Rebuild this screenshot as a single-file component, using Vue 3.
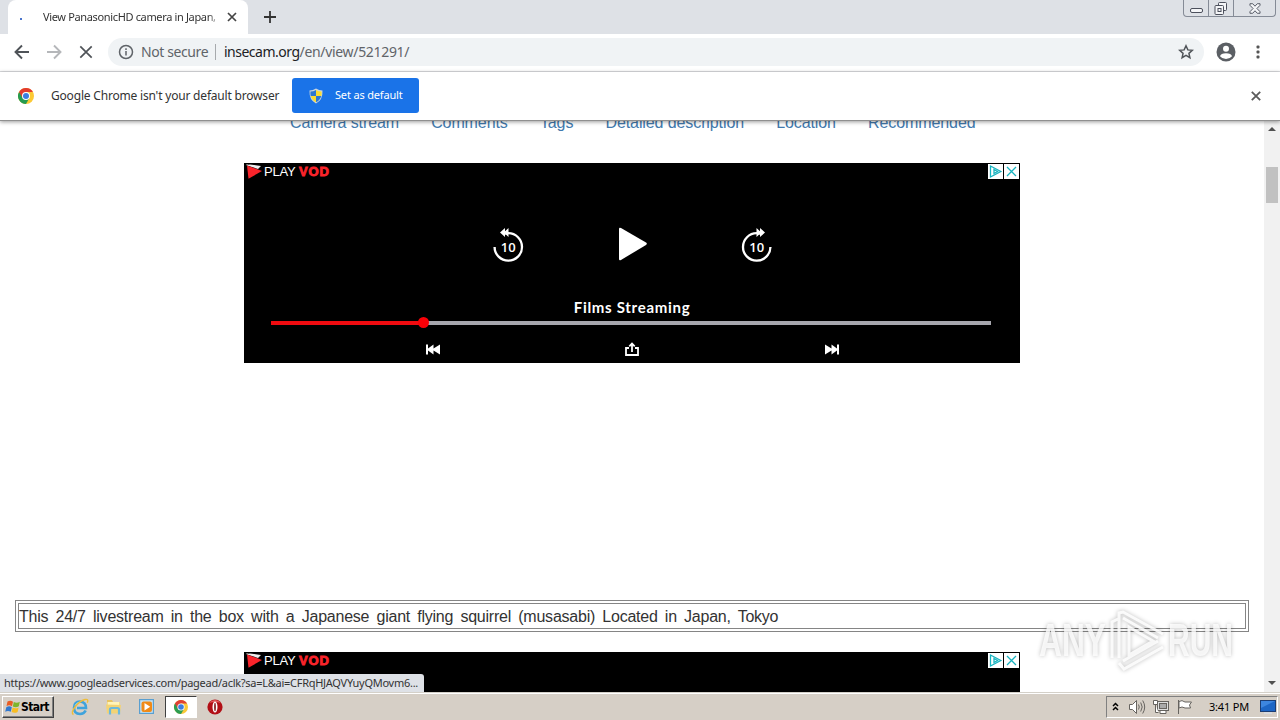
<template>
  <div class="screen">
    <header class="tabstrip">
      <div class="tab">
        <span class="spinner"></span>
        <span class="tab-title">View PanasonicHD camera in Japan,</span>
        <svg class="tab-close" viewBox="0 0 10 10"><path d="M1 1l8 8M9 1l-8 8" /></svg>
      </div>
      <svg class="new-tab" viewBox="0 0 12 12"><path d="M6 0v12M0 6h12" /></svg>
      <div class="window-controls">
        <span class="control minimize">
          <svg viewBox="0 0 13 6"><rect x=".5" y=".5" width="12" height="4" rx="1.5" /></svg>
        </span>
        <span class="control restore">
          <svg viewBox="0 0 14 14">
            <path d="M4.500 3.500v-2q0-1 1-1h6q1 0 1 1v6q0 1-1 1h-2" />
            <rect x="1" y="3.500" width="8.500" height="9" rx="1" />
            <rect x="4" y="6.500" width="3" height="3" />
          </svg>
        </span>
        <span class="control close">
          <svg viewBox="0 0 13 12"><path d="M1 .8h3l2.500 2.700L9 .8h3v1.700L8.600 6l3.400 3.500v1.700H9L6.500 8.500 4 11.200H1V9.500L4.400 6 1 2.500z" /></svg>
        </span>
      </div>
    </header>

    <div class="toolbar">
      <svg class="nav-icon" viewBox="0 0 16 16"><path d="M15 8H2M8 1.500L1.500 8 8 14.500" /></svg>
      <svg class="nav-icon muted" viewBox="0 0 16 16"><path d="M1 8h13M8 1.500L14.500 8 8 14.500" /></svg>
      <svg class="nav-icon stop" viewBox="0 0 16 16"><path d="M2.300 2.300l11.400 11.400M13.700 2.300L2.300 13.700" /></svg>
      <div class="omnibox">
        <svg class="info-icon" viewBox="0 0 16 16">
          <circle cx="8" cy="8" r="6.500" />
          <path d="M8 7v4.500M8 4.300v1.600" />
        </svg>
        <span class="not-secure">Not secure</span>
        <span class="divider"></span>
        <span class="url"><b>insecam.org</b><i>/en/view/521291/</i></span>
        <svg class="star" viewBox="0 0 16 16"><path d="M8 1.800l1.850 4.100 4.450.45-3.350 3 .95 4.400L8 11.450 4.100 13.750l.95-4.400-3.350-3 4.450-.45z" /></svg>
      </div>
      <svg class="profile" viewBox="0 0 20 20">
        <circle cx="10" cy="10" r="9.500" fill="#5b5f64" />
        <circle cx="10" cy="6.700" r="3" fill="#fff" />
        <path d="M4 14.200q.7-3 6-3t6 3Q13.700 17 10 17t-6-2.800z" fill="#fff" />
      </svg>
      <svg class="menu-dots" viewBox="0 0 4 14">
        <rect x=".5" y=".5" width="3" height="3" rx="1" />
        <rect x=".5" y="5.500" width="3" height="3" rx="1" />
        <rect x=".5" y="10.500" width="3" height="3" rx="1" />
      </svg>
    </div>

    <div class="infobar">
      <svg class="chrome-icon" viewBox="0 0 16 16">
        <circle cx="8" cy="8" r="8" fill="#fcc934" />
        <path d="M8 8L1.070 4A8 8 0 0 0 8 16l3.400-6z" fill="#259b50" />
        <path d="M8 4h6.930A8 8 0 0 0 1.070 4l3.500 6z" fill="#e33b2e" />
        <circle cx="8" cy="8" r="4" fill="#fff" />
        <circle cx="8" cy="8" r="3" fill="#3b7de0" />
      </svg>
      <span class="infobar-text">Google Chrome isn't your default browser</span>
      <button class="default-button">
        <svg viewBox="0 0 14 16">
          <path d="M7 .5Q10 2.500 13.500 2.500 14 12 7 15.500 0 12 .5 2.500 4 2.500 7 .5z" fill="#c9d6df" />
          <path d="M7 2v6H1.700Q1.200 6 1.500 3.500 4.500 3.500 7 2z" fill="#2c77d2" />
          <path d="M7 2v6h5.300q.5-2 .2-4.500Q9.500 3.500 7 2z" fill="#f9dc33" />
          <path d="M7 14.300V8H1.700Q3 12.300 7 14.300z" fill="#f9dc33" />
          <path d="M7 14.300V8h5.300Q11 12.300 7 14.300z" fill="#2c77d2" />
        </svg>
        <span>Set as default</span>
      </button>
      <svg class="infobar-close" viewBox="0 0 10 10"><path d="M.8.8l8.400 8.400M9.200.8L.8 9.200" /></svg>
    </div>

    <div class="viewport">
      <main class="page">
        <nav class="links">
          <a v-for="link in links" :key="link">{{ link }}</a>
        </nav>

        <section v-for="slot in ['top', 'bottom']" :key="slot" class="ad" :class="slot">
          <div class="ad-head">
            <svg class="brand-mark" viewBox="0 0 16 15">
              <path d="M0 0l5 2 10 3.500L11 4 1 1z" fill="#fff" />
              <path d="M0 1l4-.5 11 1.500-3 3z" fill="#eee" />
              <path d="M1 1.500L16 7 2.500 14.800z" fill="#f9242b" />
            </svg>
            <span class="brand-play">PLAY</span><span class="brand-vod">VOD</span>
            <span class="choices">
              <svg viewBox="0 0 15 15"><path d="M2.500 2v11L12.800 7.500zM6 5.500v4L9.500 7.500z" /></svg>
              <svg viewBox="0 0 15 15"><path d="M3 3l9 9M12 3l-9 9" /></svg>
            </span>
          </div>
          <template v-if="slot === 'top'">
            <div class="controls">
              <svg class="skip" viewBox="0 0 32 36">
                <path class="ring" d="M11.500 7.300Q13.500 6.200 16.300 6.200A13.700 13.700 0 1 1 2.600 19.900v1" />
                <path d="M8 5.500L13 1v3.200L16.500 1v9L13 6.800V10z" />
                <text x="16.300" y="24.500">10</text>
              </svg>
              <svg class="play" viewBox="0 0 30 34"><path d="M1 2Q1 0 3 1l25 14.500q1.700 1.200 0 2.400L3 33Q1 34 1 32z" /></svg>
              <svg class="skip" viewBox="0 0 32 36">
                <path class="ring" d="M20.500 7.300Q18.500 6.200 15.700 6.200A13.700 13.700 0 1 0 29.400 19.900v1" />
                <path d="M24 5.500L19 1v3.200L15.500 1v9L19 6.800V10z" />
                <text x="15.700" y="24.500">10</text>
              </svg>
            </div>
            <div class="ad-title">Films Streaming</div>
            <div class="track">
              <span class="played"></span>
              <span class="knob"></span>
            </div>
            <div class="actions">
              <svg viewBox="0 0 14 11"><path d="M0 .5h2v4L7.500.5v4L14 .5v10l-6.500-4v4L2 6.500v4H0z" /></svg>
              <svg class="share" viewBox="0 0 14 14"><path d="M4 6H1v7h12V6h-3M7 10V2M4.300 4.300L7 1.500l2.700 2.800" /></svg>
              <svg viewBox="0 0 14 11"><path d="M14 .5h-2v4L6.500.5v4L0 .5v10l6.500-4v4l5.500-4v4h2z" /></svg>
            </div>
          </template>
        </section>

        <p class="description">This 24/7 livestream in the box with a Japanese giant flying squirrel (musasabi) Located in Japan, Tokyo</p>
      </main>
      <aside class="scrollbar">
        <svg viewBox="0 0 8 4"><path d="M0 4l4-4 4 4z" /></svg>
        <span class="thumb"></span>
        <svg viewBox="0 0 8 4"><path d="M0 0l4 4 4-4z" /></svg>
      </aside>
    </div>

    <div class="status-bubble">https://www.googleadservices.com/pagead/aclk?sa=L&amp;ai=CFRqHJAQVYuyQMovm6...</div>

    <svg class="watermark" viewBox="0 0 200 66">
      <g class="mark">
        <text x="1" y="48" textLength="67" lengthAdjust="spacingAndGlyphs">ANY</text>
        <text x="130" y="48" textLength="65" lengthAdjust="spacingAndGlyphs">RUN</text>
        <path d="M74 50V14l6-3M81 50V5l4-1 40 22M85 10l35 20M91 19v28l24-14zM81 55l5 6 39-22M85 53l35-20" />
      </g>
    </svg>

    <footer class="taskbar">
      <div class="start">
        <svg viewBox="0 0 16 16">
          <path d="M2.500 2.500q3-1.800 5.500.2L7 7.200q-3-1.700-5.500 0z" fill="#e95d24" />
          <path d="M8.800 3q3 1.700 6-.2l-1 4.500q-3 1.700-6 .2z" fill="#7db52c" />
          <path d="M1.300 8.200q3-1.700 5.500 0l-1 4.600Q3 11.200.2 12.800z" fill="#3078cf" />
          <path d="M7.600 8.500q3 1.600 6-.1l-1 4.500q-3 1.700-6 .1z" fill="#f8bd22" />
        </svg>
        <b>Start</b>
      </div>
      <div class="quick-launch">
        <span class="launch">
          <svg viewBox="0 0 18 18">
            <path d="M14.700 12.500Q13 16 9 16q-6-.3-6-6.300Q3.200 3.600 9 3.500q6 .5 6 6.500H6" fill="none" stroke="#3fa3dc" stroke-width="2.600" />
            <path d="M4 7.500q1.500-3 5-3.200" fill="none" stroke="#a5e5fb" />
            <path d="M2.500 16.500Q-.5 15 4 9t10-7.500q4-.8 2.300 3.300" fill="none" stroke="#efbd38" stroke-width="1.400" />
          </svg>
        </span>
        <span class="launch">
          <svg viewBox="0 0 18 18">
            <path d="M2 2h5l1 2h7v10H2z" fill="#e8c462" />
            <path d="M2.500 4h12v6h-12z" fill="#fff4b8" />
            <path d="M1 6.500l15 .5-1 8.500H2z" fill="#f3d374" />
            <path d="M5 16.500v-5q0-1.500 1.500-1.500h6q1.500 0 1.500 1.500v5" fill="none" stroke="#6bb9dd" stroke-width="2.200" />
          </svg>
        </span>
        <span class="launch">
          <svg viewBox="0 0 18 18">
            <rect x="1" y="1" width="15" height="15" fill="#5a9fd0" />
            <rect x="2.200" y="2.200" width="12.600" height="12.600" fill="#c5e2f3" />
            <rect x="3.500" y="3.500" width="10.500" height="10.500" rx="2" fill="#f08a17" />
            <path d="M6.500 5v7.500L12.200 8.800z" fill="#fff" />
          </svg>
        </span>
        <span class="launch active">
          <svg viewBox="0 0 16 16">
            <circle cx="8" cy="8" r="7" fill="#f9c838" />
            <path d="M8 8L1.930 4.500A7 7 0 0 0 8 15l3-5z" fill="#2c9d51" />
            <path d="M8 4.500h6.060A7 7 0 0 0 1.930 4.500L5 9.700z" fill="#df4034" />
            <circle cx="8" cy="8" r="3.600" fill="#fff" />
            <circle cx="8" cy="8" r="2.800" fill="#3b7de0" />
          </svg>
        </span>
        <span class="launch">
          <svg viewBox="0 0 18 18">
            <circle cx="9" cy="9" r="7.600" fill="#b20f16" />
            <path d="M3 5Q9-1 15 5 9 3 3 5z" fill="#e25b5d" />
            <ellipse cx="9" cy="9" rx="2.500" ry="5.500" fill="#fff" />
            <ellipse cx="9" cy="9" rx=".8" ry="4.300" fill="#750609" />
          </svg>
        </span>
      </div>
      <div class="tray">
        <svg class="chevrons" viewBox="0 0 7 9"><path d="M1 4l2.500-2.500L6 4M1 8l2.500-2.500L6 8" /></svg>
        <svg class="tray-icon" viewBox="0 0 18 16">
          <path d="M1.500 5.500h3l4-4v13l-4-4h-3z" fill="#fff" />
          <path d="M10.500 5.500q1.500 2.500 0 5M12.700 3.500q3 4.500 0 9M14.700 1.500q4 6.500 0 13" />
        </svg>
        <svg class="tray-icon" viewBox="0 0 18 16">
          <rect x="5.500" y="2.500" width="11" height="9" fill="#ddd" />
          <rect x="7.500" y="4.500" width="7" height="5" fill="#aaa" />
          <path d="M1.500 1.500v4h4v-4zM3.500 5.500v8h3M8 14.500v-3h6v3z" fill="#fff" />
        </svg>
        <svg class="tray-icon" viewBox="0 0 18 16">
          <path d="M2.500 15V1" />
          <path d="M3 2.500q3-2 6 .5h6.500l-2 3 1 3H9q-3-2-6 0z" fill="#fff" />
        </svg>
        <span class="clock">3:41 PM</span>
        <svg class="desktop" viewBox="0 0 16 14">
          <rect x=".5" y=".5" width="15" height="11" fill="#1d66c5" stroke="#1b3d73" />
          <path d="M1 1h14L1 8z" fill="#3d86df" />
          <path d="M4 13h8" stroke="#d9e5f5" />
        </svg>
      </div>
    </footer>
  </div>
</template>

<script setup>
const links = ['Camera stream', 'Comments', 'Tags', 'Detailed description', 'Location', 'Recommended']
</script>

<style>
body {
  margin: 0;
  overflow: hidden;
}
</style>

<style scoped>
.screen {
  position: relative;
  display: flex;
  flex-direction: column;
  width: 1280px;
  height: 720px;
  overflow: hidden;
  background: #fff;
  color: #333;
  font-family: 'Noto Sans', 'Open Sans', sans-serif;
  font-size: 11px;
}

svg {
  display: block;
  flex: none;
  fill: none;
}

/* Browser chrome */
.tabstrip {
  display: flex;
  align-items: flex-start;
  height: 34px;
  background: #dee1e6;
}

.tab {
  display: flex;
  align-items: center;
  box-sizing: border-box;
  width: 240px;
  height: 34px;
  margin-left: 8px;
  padding: 0 11px 0 12px;
  background: #fff;
  border-radius: 8px 8px 0 0;
}

.spinner {
  width: 2px;
  height: 2px;
  margin: 4px 21px 0 0;
  background: #4a74cc;
}

.tab-title {
  flex: 1;
  margin-top: -1px;
  white-space: nowrap;
  overflow: hidden;
  letter-spacing: -0.35px;
  color: #333;
  -webkit-mask-image: linear-gradient(90deg, #000 93%, transparent);
  mask-image: linear-gradient(90deg, #000 93%, transparent);
}

.tab-close {
  width: 10px;
  height: 10px;
  margin-left: 6px;
  stroke: #444;
  stroke-width: 1.7;
}

.new-tab {
  width: 12px;
  height: 12px;
  margin: 11px 0 0 16px;
  stroke: #333;
  stroke-width: 1.8;
}

.window-controls {
  display: flex;
  box-sizing: border-box;
  height: 17px;
  margin-left: auto;
  margin-right: 4px;
  border: 1px solid #858b96;
  border-top: 0;
  border-radius: 0 0 4px 4px;
}

.control {
  display: flex;
  align-items: center;
  justify-content: center;
  width: 24px;
}

.control + .control { border-left: 1px solid #858b96; }
.control.close { width: 41px; }
.control svg { stroke: #4c505c; fill: #f4f5f7; }
.minimize svg { width: 13px; height: 6px; margin-top: 5px; }
.restore svg { width: 14px; height: 14px; margin-top: 1px; }
.close svg { width: 12px; height: 11px; }

.toolbar {
  display: flex;
  align-items: center;
  box-sizing: border-box;
  height: 38px;
  padding: 0 20px 1px 14px;
  border-bottom: 1px solid #dcdde0;
}

.nav-icon {
  width: 16px;
  height: 16px;
  margin-right: 16px;
  stroke: #4f5358;
  stroke-width: 1.9;
}

.nav-icon.muted { stroke: #b5b7ba; }
.nav-icon.stop { margin-right: 14px; stroke-width: 1.7; }

.omnibox {
  display: flex;
  align-items: center;
  box-sizing: border-box;
  width: 1096px;
  height: 28px;
  padding: 0 10px;
  border-radius: 14px;
  background: #f0f3f5;
  font-size: 14px;
}

.info-icon {
  width: 16px;
  height: 16px;
  stroke: #5f6368;
  stroke-width: 1.5;
}

.not-secure {
  width: 67px;
  margin: -1px 0 0 7px;
  color: #606469;
  white-space: nowrap;
  letter-spacing: -0.4px;
}

.divider {
  width: 1px;
  height: 16px;
  margin: 0 8px 0 7px;
  background: #a7aaad;
}

.url { margin-top: -1px; white-space: nowrap; }
.url b { font-weight: 400; letter-spacing: -0.5px; color: #202124; }
.url i { font-style: normal; letter-spacing: -0.32px; color: #606469; }

.star {
  width: 16px;
  height: 16px;
  margin-left: auto;
  stroke: #505459;
  stroke-width: 1.5;
}

.profile {
  width: 20px;
  height: 20px;
  margin-left: 12px;
}

.menu-dots {
  width: 4px;
  height: 14px;
  margin-left: auto;
  fill: #555;
}

.infobar {
  position: relative;
  z-index: 1;
  display: flex;
  align-items: center;
  box-sizing: border-box;
  height: 49px;
  padding: 0 19px 1px 18px;
  border-bottom: 1px solid #8f8f8f;
  background: #fff;
  box-shadow: 0 1px 4px rgba(0, 0, 0, 0.4);
}

.chrome-icon { width: 16px; height: 16px; }

.infobar-text {
  width: 229px;
  margin: 0 12px 0 17px;
  white-space: nowrap;
  font-size: 12px;
  letter-spacing: -0.19px;
}

.default-button {
  display: flex;
  align-items: center;
  width: 127px;
  height: 35px;
  margin: 0;
  padding: 0 0 0 17px;
  border: 0;
  border-radius: 3px;
  background: #1a73e8;
  color: #fff;
  font: inherit;
  letter-spacing: -0.17px;
  white-space: nowrap;
}

.default-button svg { width: 14px; height: 16px; margin-right: 12px; }
.default-button span { margin-top: -2px; }

.infobar-close {
  width: 10px;
  height: 10px;
  margin-left: auto;
  stroke: #5b5b5b;
  stroke-width: 1.8;
}

/* Page */
.viewport {
  display: flex;
  flex: 1;
  min-height: 0;
  background: #fff;
}

.page {
  display: flex;
  flex-direction: column;
  align-items: center;
  width: 1264px;
  overflow: hidden;
  font-family: 'Liberation Sans', Arial, sans-serif;
  font-size: 16px;
}

.links {
  display: flex;
  flex: none;
  gap: 32.200px;
  align-self: flex-start;
  height: 50px;
  margin: -8px 0 0 290px;
  line-height: 20px;
  letter-spacing: -0.1px;
  color: #4279ad;
}

.ad {
  box-sizing: border-box;
  flex: none;
  width: 776px;
  height: 200px;
  background: #000;
  color: #fff;
}

.ad.bottom {
  order: 3;
  margin-top: 20px;
}

.ad-head {
  display: flex;
  height: 17px;
  padding: 1px 1px 0 2px;
  box-sizing: border-box;
  line-height: 15px;
}

.brand-mark { width: 16px; height: 15px; margin-right: 2px; }

.brand-play,
.brand-vod {
  font-size: 13px;
}

.brand-play { width: 35px; letter-spacing: -0.2px; }

.brand-vod {
  font-weight: 700;
  letter-spacing: 0.9px;
  color: #f9242b;
  -webkit-text-stroke: 0.9px #f9242b;
}

.choices {
  display: flex;
  gap: 1px;
  margin-left: auto;
}

.choices svg {
  width: 15px;
  height: 15px;
  background: #fff;
  stroke: #17b3c0;
  stroke-width: 1.3;
}

.controls {
  display: flex;
  justify-content: space-between;
  width: 280px;
  margin: 47px 0 0 248px;
}

.controls svg { fill: #fff; }
.skip { width: 32px; height: 36px; }
.skip:last-child { margin-right: -1px; }
.play { width: 30px; height: 34px; }
.ring { fill: none; stroke: #fff; stroke-width: 2.3; }

.skip text {
  font: 600 13px 'Open Sans', sans-serif;
  text-anchor: middle;
}

.ad-title {
  height: 20px;
  margin-top: 34px;
  font: 700 15px/20px Lato, sans-serif;
  letter-spacing: 0.7px;
  text-align: center;
}

.track {
  display: flex;
  align-items: center;
  width: 720px;
  height: 4px;
  margin: 4px 0 0 27px;
  background: #a7a7ae;
}

.played {
  width: 148px;
  height: 4px;
  background: #ef0b10;
}

.knob {
  width: 11px;
  height: 11px;
  margin: -1px 0 0 -1px;
  border-radius: 50%;
  background: #fa0007;
}

.actions {
  display: flex;
  align-items: center;
  justify-content: space-between;
  width: 413px;
  margin: 17px 0 0 181.500px;
}

.actions svg { width: 14px; height: 11px; fill: #fff; }
.actions .share { height: 14px; fill: none; stroke: #fff; stroke-width: 1.8; }

.description {
  order: 2;
  flex: none;
  align-self: flex-start;
  box-sizing: border-box;
  width: 1234px;
  height: 32px;
  margin: 237px 0 0 15px;
  border: 4px double #858585;
  line-height: 25px;
  white-space: nowrap;
  letter-spacing: -0.23px;
  word-spacing: 3px;
}

.scrollbar {
  display: flex;
  flex-direction: column;
  align-items: center;
  box-sizing: border-box;
  width: 16px;
  padding: 6px 0 7px;
  background: #f1f1f1;
}

.scrollbar svg { width: 8px; height: 4px; fill: #505050; }

.thumb {
  width: 12px;
  height: 36px;
  margin: 36px 0 auto;
  background: #c1c1c1;
}

/* Lies over the bottom left corner of the page */
.status-bubble {
  position: absolute;
  left: 0;
  bottom: 28px;
  box-sizing: border-box;
  width: 424px;
  height: 18px;
  padding-left: 4px;
  border-radius: 0 3px 0 0;
  background: #dee1e6;
  line-height: 18px;
  letter-spacing: -0.27px;
  white-space: nowrap;
}

.watermark {
  position: absolute;
  left: 1038px;
  top: 608px;
  width: 200px;
  height: 66px;
  filter: drop-shadow(0 0 2px rgba(0, 0, 0, 0.32));
}

.mark {
  fill: rgba(255, 255, 255, 0.8);
  stroke: none;
}

.mark text {
  font: 700 46px 'Liberation Sans', sans-serif;
}

.mark path {
  fill: none;
  stroke: rgba(255, 255, 255, 0.85);
  stroke-width: 3;
}

/* Taskbar */
.taskbar {
  display: flex;
  align-items: center;
  box-sizing: border-box;
  height: 28px;
  padding: 2px 2px 1px;
  border-top: 1px solid #d4d0c8;
  background: #d6cfc6;
  box-shadow: inset 0 1px #fff;
  color: #000;
}

.start {
  display: flex;
  align-items: center;
  box-sizing: border-box;
  width: 52px;
  height: 22px;
  padding-left: 2px;
  border: 1px solid;
  border-color: #fff #404040 #404040 #fff;
  box-shadow: inset -1px -1px #808080;
}

.start svg { width: 16px; height: 16px; }

.start b {
  font: 700 12px 'DejaVu Sans Condensed', 'DejaVu Sans', sans-serif;
  letter-spacing: -0.6px;
}

.quick-launch {
  display: flex;
  margin-left: 10px;
}

.launch {
  display: flex;
  align-items: center;
  justify-content: center;
  box-sizing: border-box;
  width: 32px;
  height: 22px;
  margin-right: 1.700px;
}

.launch svg { width: 18px; height: 18px; }

.launch.active {
  border: 1px solid;
  border-color: #404040 #fff #fff #404040;
  background: #fff;
}

.launch.active svg { width: 16px; height: 16px; }

.tray {
  display: flex;
  align-items: center;
  box-sizing: border-box;
  width: 172px;
  height: 22px;
  margin-left: auto;
  padding-left: 5px;
  border: 1px solid;
  border-color: #808080 #fff #fff #808080;
}

.chevrons {
  width: 7px;
  height: 9px;
  margin: 0 9px 2px 0;
  stroke: #000;
  stroke-width: 1.5;
}

.tray-icon {
  width: 18px;
  height: 16px;
  margin-right: 6px;
  stroke: #66635f;
}

.clock {
  width: 40px;
  margin: -1px 11px 0 9px;
  letter-spacing: -0.2px;
  white-space: nowrap;
}

.desktop { width: 16px; height: 14px; }
</style>
